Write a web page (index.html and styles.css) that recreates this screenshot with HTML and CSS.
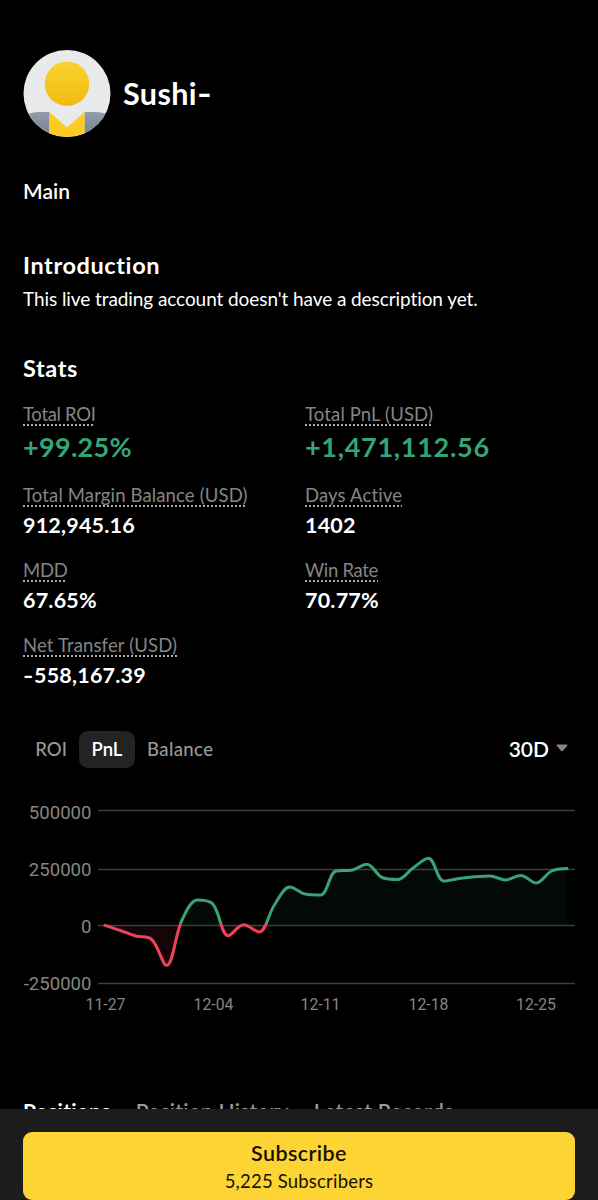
FILE: index.html
```
<!DOCTYPE html>
<html lang="en">
<head>
    <meta charset="UTF-8">
    <meta name="viewport" content="width=device-width, initial-scale=1.0">
    <title>Sushi-</title>
    <link rel="stylesheet" href="styles.css">
</head>
<body>
    <div class="page">
        <div class="profile">
            <svg class="avatar" width="88" height="88" viewBox="0 0 88 88">
                <defs>
                    <clipPath id="round"><circle cx="44" cy="43.500" r="43.500"/></clipPath>
                    <linearGradient id="gold" x1="0" y1="0" x2="0" y2="1"><stop offset="0" stop-color="#fbd22f"/><stop offset="1" stop-color="#f1bb12"/></linearGradient>
                    <linearGradient id="gray" x1="0" y1="0" x2="0" y2="1"><stop offset="0" stop-color="#949bab"/><stop offset="1" stop-color="#767e8f"/></linearGradient>
                </defs>
                <g clip-path="url(#round)">
                    <rect width="88" height="88" fill="#e8eaeb"/>
                    <path d="M0 66Q8 62 16 62H26.5V88H0zM61.500 62H72Q80 62 88 66V88H61.500z" fill="url(#gray)"/>
                    <path d="M26.500 62L44 77.500L61.500 62V88H26.500z" fill="#fbcd20"/>
                    <circle cx="44" cy="33.700" r="22.300" fill="url(#gold)"/>
                </g>
            </svg>
            <h1 class="name">Sushi<span class="dash">-</span></h1>
        </div>

        <div class="account">Main</div>

        <h2 class="title intro">Introduction</h2>
        <p class="description">This live trading account doesn't have a description yet.</p>

        <h2 class="title statsTitle">Stats</h2>
        <div class="stats">
            <div class="stat big"><span class="label short">Total ROI</span><b class="value roi">+99.25%</b></div>
            <div class="stat big"><span class="label">Total PnL (USD)</span><b class="value">+1,471,112.56</b></div>
            <div class="stat"><span class="label">Total Margin Balance (USD)</span><b class="value">912,945.16</b></div>
            <div class="stat"><span class="label">Days Active</span><b class="value">1402</b></div>
            <div class="stat"><span class="label short">MDD</span><b class="value">67.65%</b></div>
            <div class="stat"><span class="label short">Win Rate</span><b class="value">70.77%</b></div>
            <div class="stat"><span class="label">Net Transfer (USD)</span><b class="value"><span class="dash">-</span>558,167.39</b></div>
        </div>

        <div class="chartHead">
            <div class="switch">
                <span class="option">ROI</span>
                <span class="option active">PnL</span>
                <span class="option balance">Balance</span>
            </div>
            <div class="period">30D <svg width="12" height="8" viewBox="0 0 12 8"><path d="M1 .5H11Q12 .8 11.300 1.700L6.800 7Q6 7.700 5.200 7L.7 1.700Q0 .8 1 .5z" fill="#858585"/></svg></div>
        </div>

        <svg class="chart" width="598" height="230" viewBox="0 0 598 230">
            <defs>
                <!-- green above the zero line, red below it -->
                <linearGradient id="line" gradientUnits="userSpaceOnUse" x1="0" y1="0" x2="0" y2="230">
                    <stop offset=".5804" stop-color="#3aa274"/><stop offset=".5804" stop-color="#ee4259"/>
                </linearGradient>
                <linearGradient id="area" gradientUnits="userSpaceOnUse" x1="0" y1="0" x2="0" y2="230">
                    <stop offset=".5870" stop-color="#2ebd85" stop-opacity=".05"/><stop offset=".5870" stop-color="#f6465d" stop-opacity=".08"/>
                </linearGradient>
            </defs>
            <g class="grid">
                <path d="M98 20.500H575M98 79.500H575M98 135.500H575M98 193.500H575"/>
            </g>
            <g class="yAxis">
                <text x="91.500" y="28.500">500000</text>
                <text x="91.500" y="86">250000</text>
                <text x="91.500" y="142.500">0</text>
                <text x="91.500" y="200">-250000</text>
            </g>
            <path id="pnlArea" fill="url(#area)"/>
            <path id="pnlLine" class="pnlLine" stroke="url(#line)"/>
            <g class="xAxis">
                <text x="105.500" y="220">11-27</text>
                <text x="213.500" y="220">12-04</text>
                <text x="320.500" y="220">12-11</text>
                <text x="428.500" y="220">12-18</text>
                <text x="536" y="220">12-25</text>
            </g>
        </svg>

        <div class="tabs">
            <span class="tab current">Positions</span>
            <span class="tab">Position History</span>
            <span class="tab">Latest Records</span>
        </div>
    </div>

    <div class="footer">
        <button type="button" class="subscribe">
            <span class="subscribeText">Subscribe</span>
            <span class="subscribers">5,225 Subscribers</span>
        </button>
    </div>

    <script>
        var levels = [135.3, 140.5, 146, 149, 175.3, 130, 110, 114, 145.8, 134.8, 142, 115, 97, 104, 105, 81,
            80.2, 74.3, 87.500, 89.500, 78, 68.200, 91, 88.500, 86.800, 86, 90, 85.500, 93, 81, 78.500];
        var points = levels.map(function(y, i){ return [105 + i * 15.4, y]; });

        function clamp(v, a, b){
            return Math.max(Math.min(a, b), Math.min(Math.max(a, b), v));
        }
        function dist(a, b){
            return Math.hypot(a[0] - b[0], a[1] - b[1]);
        }
        //smooth curve through all the points..
        function smoothPath(pts){
            var d = "M" + pts[0], out = pts[0];
            for(var i=1; i<pts.length; i++){
                var p = pts[i], prev = pts[i-1], next = pts[i+1], into = p, nextOut = p;
                if(next){
                    var a = dist(p, prev), b = dist(p, next);
                    nextOut = [0, 1].map(function(k){
                        return clamp(p[k] + (next[k] - prev[k]) * 0.35 * b / (a + b), p[k], next[k]);
                    });
                    into = [0, 1].map(function(k){
                        return clamp(p[k] - (nextOut[k] - p[k]) * a / b, prev[k], p[k]);
                    });
                    nextOut = [0, 1].map(function(k){
                        return p[k] + (p[k] - into[k]) * b / a;
                    });
                }
                d += "C" + out + " " + into + " " + p;
                out = nextOut;
            }
            return d;
        }
        var path = smoothPath(points);
        document.getElementById("pnlLine").setAttribute("d", path);
        document.getElementById("pnlArea").setAttribute("d", path + "V135H105Z");
    </script>
</body>
</html>
```
FILE: styles.css
```
*{
    box-sizing: border-box;
}
body{
    margin: 0;
    background: #000;
    color: #fff;
    font-family: Lato, "Open Sans", sans-serif;
    font-size: 18.5px;
    font-variant-ligatures: none;
}
.page{
    height: 1200px;
    overflow: hidden;
    padding: 50px 23px 0;
}
.profile{
    display: flex;
    align-items: center;
    gap: 12px;
    height: 88px;
}
.name{
    margin: 0;
    padding-bottom: 3px;
    font-size: 30.5px;
    font-weight: 700;
    line-height: 36px;
    letter-spacing: .4px;
}
/* wider dash than the font's own */
.dash{
    display: inline-block;
    transform: scaleX(1.3);
    transform-origin: left;
    margin-right: .13em;
}
.account{
    margin-top: 39px;
    font-size: 21px;
    font-weight: 600;
    line-height: 28px;
}
.title{
    margin: 0;
    font-size: 23.5px;
    font-weight: 700;
    line-height: 30px;
    letter-spacing: .6px;
}
.intro{
    margin-top: 45px;
}
.description{
    margin: 7px 0 0;
    font-size: 19px;
    line-height: 24px;
    letter-spacing: -.08px;
    white-space: nowrap;
}
.statsTitle{
    margin-top: 42px;
}
.stats{
    display: grid;
    grid-template-columns: 282px 1fr;
    row-gap: 19px;
    margin-top: 19px;
}
.stat{
    display: flex;
    flex-direction: column;
    align-items: flex-start;
    height: 56px;
}
.stat.big{
    height: 62px;
}
.label{
    color: #858585;
    line-height: 24px;
    letter-spacing: .14px;
    white-space: nowrap;
    text-decoration: underline dotted #aaa 2px;
    text-underline-offset: 2.5px;
}
.label.short{
    letter-spacing: -.3px;
}
.value{
    margin-top: 4px;
    font-size: 21.5px;
    font-weight: 700;
    line-height: 28px;
    letter-spacing: .2px;
}
.big .value{
    margin-top: 5px;
    color: #36a576;
    font-size: 27px;
    line-height: 32px;
    letter-spacing: .7px;
}
.big .roi{
    letter-spacing: .3px;
}
.chartHead{
    display: flex;
    justify-content: space-between;
    align-items: center;
    height: 38px;
    margin-top: 41px;
    padding-right: 7px;
}
.switch{
    display: flex;
}
.option{
    padding: 0 12.3px;
    border-radius: 9px;
    color: #999;
    font-weight: 500;
    line-height: 37px;
}
.option.active{
    background: #232323;
    color: #fff;
    font-weight: 600;
}
.option.balance{
    letter-spacing: .4px;
}
.period{
    display: flex;
    align-items: center;
    gap: 7px;
    padding-bottom: 2px;
    font-size: 21px;
    font-weight: 600;
}
.chart{
    display: block;
    margin: 22px 0 0 -23px;
}
.grid path{
    stroke: #3c3c3c;
    stroke-width: 1.500;
}
.yAxis, .xAxis{
    fill: #858585;
    font-family: Roboto, sans-serif;
    font-size: 18.6px;
    text-anchor: end;
}
.xAxis{
    font-size: 15.8px;
    text-anchor: middle;
}
.pnlLine{
    fill: none;
    stroke-width: 3;
    stroke-linecap: round;
    stroke-linejoin: round;
}
.tabs{
    display: flex;
    gap: 25px;
    margin-top: 78px;
    font-size: 21px;
    line-height: 26px;
    letter-spacing: .25px;
    white-space: nowrap;
}
.tab{
    color: #999;
    font-weight: 600;
}
.tab.current{
    color: #fff;
    font-weight: 700;
}
.footer{
    position: fixed;
    left: 0;
    right: 0;
    bottom: 0;
    height: 91px;
    padding: 23px 23px 0;
    background: #1c1c1c;
}
.subscribe{
    display: flex;
    flex-direction: column;
    align-items: center;
    width: 552px;
    height: 68px;
    padding: 7px 0 0;
    border: 0;
    border-radius: 9px;
    background: #fcd535;
    color: #181000;
    font-family: inherit;
}
.subscribeText{
    font-size: 21.5px;
    font-weight: 600;
    line-height: 28px;
    letter-spacing: .4px;
}
.subscribers{
    font-size: 18.5px;
    line-height: 28px;
    letter-spacing: .2px;
}
```
